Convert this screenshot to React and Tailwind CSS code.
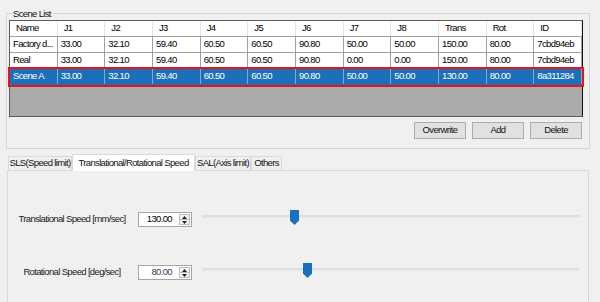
const columns = ["Name", "J1", "J2", "J3", "J4", "J5", "J6", "J7", "J8", "Trans", "Rot", "ID"];

const scenes = [
    ["Factory d...", "33.00", "32.10", "59.40", "60.50", "60.50", "90.80", "50.00", "50.00", "150.00", "80.00", "7cbd94eb"],
    ["Real", "33.00", "32.10", "59.40", "60.50", "60.50", "90.80", "0.00", "0.00", "150.00", "80.00", "7cbd94eb"],
    ["Scene A", "33.00", "32.10", "59.40", "60.50", "60.50", "90.80", "50.00", "50.00", "130.00", "80.00", "8a311284"],
];

const tabs = [
    { label: "SLS(Speed limit)", width: "w-[64px]" },
    { label: "Translational/Rotational Speed", width: "w-[123px]", active: true },
    { label: "SAL(Axis limit)", width: "w-[56px]" },
    { label: "Others", width: "w-[31px]" },
];

const SpinBox = ({ value, dim }) => (
    <div className="flex h-[15px] w-[54px] border border-[#a5a5a5] bg-white">
        <div className={`flex-1 flex items-center justify-end pr-[7px] ${dim ? "text-[#3a3a52]" : "text-black"}`}>
            {value}
        </div>
        <div className="flex flex-col w-[11px] my-[1px] mr-[1px] border border-[#bdbdbd] bg-[#f3f3f3]">
            <div className="flex-1 flex items-center justify-center border-b border-[#bdbdbd]">
                <svg width="5" height="3" viewBox="0 0 5 3"><path d="M2.5 0 L5 3 L0 3 Z" fill="#222" /></svg>
            </div>
            <div className="flex-1 flex items-center justify-center">
                <svg width="5" height="3" viewBox="0 0 5 3"><path d="M0 0 L5 0 L2.5 3 Z" fill="#222" /></svg>
            </div>
        </div>
    </div>
);

const Slider = ({ thumbLeft }) => (
    <div className="relative h-[15px] w-[377px]">
        <div className="absolute left-0 right-0 top-[5px] h-[3px] bg-[#dedede] border-b border-[#e8e8e8]" />
        <svg className={`absolute top-0 ${thumbLeft}`} width="9" height="15" viewBox="0 0 9 15">
            <path d="M0 0 H9 V10.5 L4.5 15 L0 10.5 Z" fill="#1b6fbf" />
        </svg>
    </div>
);

const SpeedRow = ({ label, value, thumbLeft, dim, className }) => (
    <div className={`flex items-start ${className}`}>
        <div className="ml-[4px] mt-[2px] w-[120px] h-[15px] flex items-center justify-center whitespace-nowrap text-[#222]">{label}</div>
        <div className="ml-[6px] mt-[2px]">
            <SpinBox value={value} dim={dim} />
        </div>
        <div className="ml-[10px]">
            <Slider thumbLeft={thumbLeft} />
        </div>
    </div>
);

export default function App() {
    return (
        <div
            className="w-[600px] h-[302px] overflow-hidden bg-[#f0f0f0] text-[9.5px] tracking-[-0.65px] text-black"
            style={{ fontFamily: "'Liberation Sans', Arial, sans-serif" }}
        >
            {/* Scene List group */}
            <fieldset className="ml-[6px] mt-[7px] w-[584px] h-[142px] border border-[#d5d5d5]">
                <legend className="ml-[5px] px-[1px] leading-[13px] text-[#111]">Scene List</legend>

                <div className="ml-[2px] w-[574px] h-[97px] flex flex-col border border-[#5c5c5c] border-r-[#111] bg-[#ababab]">
                    {/* header */}
                    <div className="grid grid-cols-12 h-[16px] bg-white border-b border-[#a0a0a0]">
                        {columns.map((c) => (
                            <div key={c} className="flex items-center pl-[6px] border-r border-[#e3e3e3]">{c}</div>
                        ))}
                    </div>

                    {scenes.map((row, i) => {
                        const selected = i === scenes.length - 1;
                        return (
                            <div
                                key={i}
                                className={`grid grid-cols-12 h-[16px] border-b ${selected
                                    ? "bg-[#1c6fb9] text-white border-[#1c6fb9] outline-2 outline-[#e8141c] relative z-10"
                                    : "bg-white border-[#a0a0a0]"
                                    }`}
                            >
                                {row.map((cell, j) => (
                                    <div
                                        key={j}
                                        className={`flex items-center pl-[3px] whitespace-nowrap overflow-hidden border-r ${selected ? "border-[#8fa6bf]" : "border-[#a0a0a0]"}`}
                                    >
                                        {cell}
                                    </div>
                                ))}
                            </div>
                        );
                    })}
                </div>

                {/* buttons */}
                <div className="flex justify-end gap-[6px] mt-[5px] pr-[7px]">
                    {["Overwrite", "Add", "Delete"].map((b) => (
                        <button
                            key={b}
                            type="button"
                            className="w-[52px] h-[17px] border border-[#adadad] bg-[#e1e1e1] text-[#111]"
                        >
                            {b}
                        </button>
                    ))}
                </div>
            </fieldset>

            {/* Tabs */}
            <div className="flex items-end ml-[8px] mt-[5px] h-[16px]">
                {tabs.map((t) =>
                    t.active ? (
                        <div
                            key={t.label}
                            className={`relative z-10 -mb-px h-[17px] ${t.width} flex items-center justify-center whitespace-nowrap bg-white border border-b-0 border-[#d9d9d9] text-[#111]`}
                        >
                            {t.label}
                        </div>
                    ) : (
                        <div
                            key={t.label}
                            className={`h-[14px] ${t.width} flex items-center justify-center whitespace-nowrap bg-[#f0f0f0] border border-b-0 border-[#d9d9d9] text-[#111]`}
                        >
                            {t.label}
                        </div>
                    )
                )}
            </div>

            <div className="ml-[7px] w-[582px] h-[140px] border border-[#d9d9d9] bg-[#f0f0f0]">
                <SpeedRow
                    className="mt-[39px]"
                    label="Translational Speed [mm/sec]"
                    value="130.00"
                    thumbLeft="left-[88px]"
                />
                <SpeedRow
                    className="mt-[36px]"
                    label="Rotational Speed [deg/sec]"
                    value="80.00"
                    thumbLeft="left-[101px]"
                    dim
                />
            </div>
        </div>
    );
}
